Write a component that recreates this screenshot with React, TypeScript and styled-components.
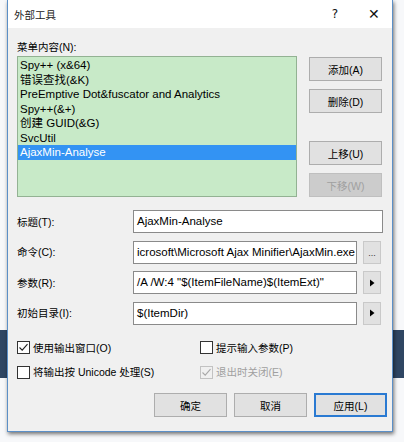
import styled, { createGlobalStyle } from "styled-components"

const GlobalStyle = createGlobalStyle`
  html, body {
    margin: 0;
    padding: 0;
  }
  body {
    width: 404px;
    height: 442px;
    overflow: hidden;
    background: linear-gradient(to bottom, #f7f8fa 0, #f7f8fa 330px, #2f4663 330px, #2f4663 378px, #f7f8fa 378px);
    font-family: "Liberation Sans", "Noto Sans CJK SC", sans-serif;
  }
`

const menuItems = [
  "Spy++ (x&64)",
  "错误查找(&K)",
  "PreEmptive Dot&fuscator and Analytics",
  "Spy++(&+)",
  "创建 GUID(&G)",
  "SvcUtil",
  "AjaxMin-Analyse",
]

const CheckMark = ({ color }: { color: string }) => (
  <svg width="11" height="11" viewBox="0 0 11 11">
    <path d="M1.5 5.5 L4.2 8.2 L9.5 2.2" fill="none" stroke={color} strokeWidth="1.1" />
  </svg>
)

const Arrow = () => (
  <svg width="6" height="8" viewBox="0 0 6 8">
    <path d="M1 0.5 L5.5 4 L1 7.5 Z" fill="#000" />
  </svg>
)

export default function App() {
  return (
    <>
      <GlobalStyle />
      <Page>
        <Dialog>
          <TitleBar>
            <Title>外部工具</Title>
            <TitleButtons>
              <TitleGlyph $w={42}>?</TitleGlyph>
              <TitleGlyph $w={36} $big>✕</TitleGlyph>
            </TitleButtons>
          </TitleBar>
          <Body>
            <Label>菜单内容(N):</Label>
            <ListRow>
              <ListBox>
                {menuItems.map((item, i) => (
                  <ListItem key={item} $selected={i === menuItems.length - 1}>
                    {item}
                  </ListItem>
                ))}
              </ListBox>
              <SideButtons>
                <Button>添加(A)</Button>
                <Button>删除(D)</Button>
                <Button $gapTop>上移(U)</Button>
                <Button disabled>下移(W)</Button>
              </SideButtons>
            </ListRow>

            <Form>
              <FormRow>
                <FieldLabel>标题(T):</FieldLabel>
                <Input $wide>AjaxMin-Analyse</Input>
              </FormRow>
              <FormRow>
                <FieldLabel>命令(C):</FieldLabel>
                <Input>icrosoft\Microsoft Ajax Minifier\AjaxMin.exe</Input>
                <SmallButton>
                  <Dots>...</Dots>
                </SmallButton>
              </FormRow>
              <FormRow>
                <FieldLabel>参数(R):</FieldLabel>
                <Input>/A /W:4 "$(ItemFileName)$(ItemExt)"</Input>
                <SmallButton>
                  <Arrow />
                </SmallButton>
              </FormRow>
              <FormRow>
                <FieldLabel>初始目录(I):</FieldLabel>
                <Input>$(ItemDir)</Input>
                <SmallButton>
                  <Arrow />
                </SmallButton>
              </FormRow>
            </Form>

            <Options>
              <Option>
                <Box>
                  <CheckMark color="#222" />
                </Box>
                使用输出窗口(O)
              </Option>
              <Option>
                <Box />
                提示输入参数(P)
              </Option>
              <Option>
                <Box />
                将输出按 Unicode 处理(S)
              </Option>
              <Option $disabled>
                <Box $disabled>
                  <CheckMark color="#a8a8a8" />
                </Box>
                退出时关闭(E)
              </Option>
            </Options>

            <Footer>
              <Button>确定</Button>
              <Button>取消</Button>
              <Button $default>应用(L)</Button>
            </Footer>
          </Body>
        </Dialog>
      </Page>
    </>
  )
}

const Page = styled.div`
  padding-left: 7px;
  height: 442px;
  box-sizing: border-box;
`

const Dialog = styled.div`
  width: 386px;
  height: 432px;
  box-sizing: border-box;
  border: 1px solid #5b8fc7;
  border-top: none;
  background: #f0f0f0;
  box-shadow: 1px 2px 4px rgba(0, 0, 0, 0.55);
  display: flex;
  flex-direction: column;
  font-size: 10.5px;
  color: #000;
`

const TitleBar = styled.div`
  height: 28px;
  background: #fff;
  display: flex;
  align-items: center;
  justify-content: space-between;
  padding-left: 6px;
`

const Title = styled.span`
  font-size: 10.5px;
  line-height: 16px;
  color: #222;
  padding-top: 1px;
`

const TitleButtons = styled.div`
  display: flex;
  align-items: center;
  height: 100%;
`

const TitleGlyph = styled.span<{ $big?: boolean; $w: number }>`
  width: ${(p) => p.$w}px;
  text-align: center;
  font-size: ${(p) => (p.$big ? "14px" : "12px")};
  line-height: 16px;
  color: #111;
  font-family: "DejaVu Sans", sans-serif;
  font-weight: ${(p) => (p.$big ? 300 : 400)};
`

const Body = styled.div`
  flex: 1;
  padding: 11px 5px 0 9px;
  display: flex;
  flex-direction: column;
`

const Label = styled.div`
  line-height: 16px;
  height: 16px;
  margin-bottom: 1px;
`

const ListRow = styled.div`
  display: flex;
  gap: 12px;
`

const ListBox = styled.div`
  width: 280px;
  height: 141px;
  box-sizing: border-box;
  border: 1px solid #93b293;
  background: #c8eac8;
  padding-top: 1px;
`

const ListItem = styled.div<{ $selected?: boolean }>`
  height: 14.5px;
  line-height: 14.5px;
  font-size: 11.5px;
  padding-left: 2px;
  white-space: nowrap;
  background: ${(p) => (p.$selected ? "#3393f3" : "transparent")};
  color: ${(p) => (p.$selected ? "#fff" : "#000")};
`

const SideButtons = styled.div`
  display: flex;
  flex-direction: column;
  gap: 8px;
  padding-top: 1px;
`

const Button = styled.button<{ $gapTop?: boolean; $default?: boolean }>`
  width: 73px;
  height: 24px;
  box-sizing: border-box;
  margin: 0;
  margin-top: ${(p) => (p.$gapTop ? "20px" : "0")};
  padding: 0;
  font-family: inherit;
  font-size: 10.5px;
  color: #000;
  background: #e1e1e1;
  border: ${(p) => (p.$default ? "2px solid #2a7ad2" : "1px solid #adadad")};

  &:disabled {
    background: #cccccc;
    border-color: #bfbfbf;
    color: #a0a0a0;
  }
`

const Form = styled.div`
  margin-top: 13px;
  display: flex;
  flex-direction: column;
  gap: 7.5px;
`

const FormRow = styled.div`
  display: flex;
  align-items: center;
  height: 23px;
`

const FieldLabel = styled.span`
  width: 116px;
  line-height: 16px;
`

const Input = styled.div<{ $wide?: boolean }>`
  width: ${(p) => (p.$wide ? "250px" : "224px")};
  height: 23px;
  box-sizing: border-box;
  border: 1px solid #8a8a8a;
  background: #fff;
  padding-left: 3px;
  line-height: 21px;
  font-size: 11.5px;
  white-space: nowrap;
  overflow: hidden;
`

const SmallButton = styled.div`
  width: 18px;
  height: 23px;
  box-sizing: border-box;
  margin-left: 6px;
  border: 1px solid #c9c9c9;
  background: #e1e1e1;
  display: flex;
  align-items: center;
  justify-content: center;
`

const Dots = styled.span`
  font-size: 9px;
  line-height: 9px;
  margin-top: 3px;
  color: #333;
`

const Options = styled.div`
  margin-top: 15px;
  display: grid;
  grid-template-columns: 183px 1fr;
  row-gap: 8.5px;
`

const Option = styled.div<{ $disabled?: boolean }>`
  display: flex;
  align-items: center;
  gap: 3px;
  height: 16px;
  line-height: 16px;
  color: ${(p) => (p.$disabled ? "#a0a0a0" : "#000")};
  white-space: nowrap;
`

const Box = styled.span<{ $disabled?: boolean }>`
  width: 13px;
  height: 13px;
  box-sizing: border-box;
  border: 1px solid ${(p) => (p.$disabled ? "#c2c2c2" : "#333")};
  background: ${(p) => (p.$disabled ? "#f0f0f0" : "#fff")};
  display: flex;
  align-items: center;
  justify-content: center;
`

const Footer = styled.div`
  margin-top: 13px;
  display: flex;
  justify-content: flex-end;
  gap: 7px;
`
